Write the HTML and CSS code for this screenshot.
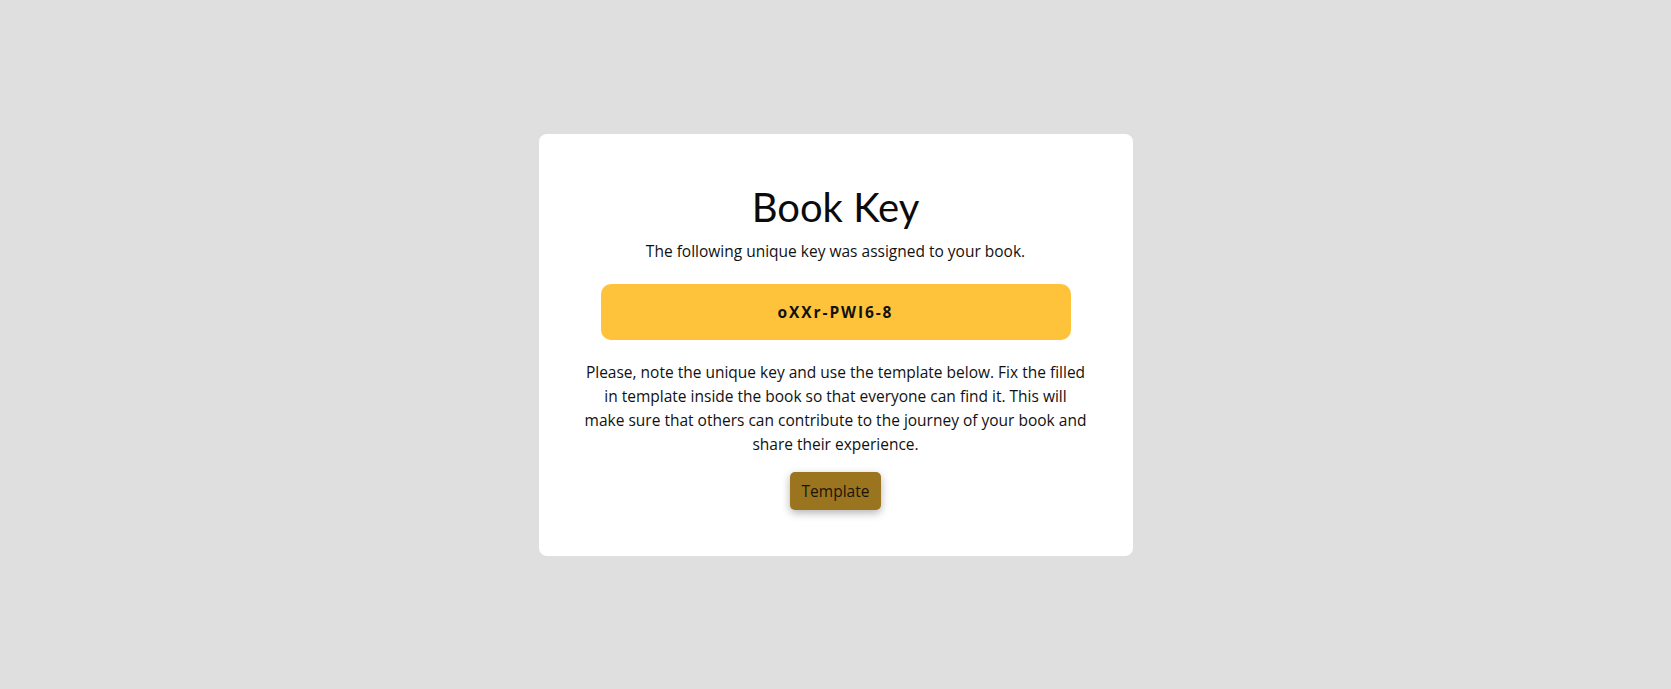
FILE: index.html
```html
<!DOCTYPE html>
<html lang="en">
<head>
<meta charset="utf-8">
<title>Book Key</title>
<link rel="stylesheet" href="styles.css">
</head>
<body>
<main class="page">
  <section class="card">
    <h1 class="title">Book Key</h1>
    <p class="subtitle">The following unique key was assigned to your book.</p>
    <div class="key">oXXr-PWI6-8</div>
    <p class="text">Please, note the unique key and use the template below. Fix the filled in template inside the book so that everyone can find it. This will make sure that others can contribute to the journey of your book and share their experience.</p>
    <button class="btn" type="button">Template</button>
  </section>
</main>
</body>
</html>
```
FILE: styles.css
```css
html, body {
  margin: 0;
  padding: 0;
}
body {
  background: #dfdfdf;
  font-family: "Open Sans", "Noto Sans", sans-serif;
  color: #111;
}
.page {
  min-height: 689px;
  display: flex;
  align-items: center;
  justify-content: center;
}
.card {
  width: 594px;
  box-sizing: border-box;
  background: #fff;
  border-radius: 8px;
  padding: 49px 40px 46px;
  display: flex;
  flex-direction: column;
  align-items: center;
  text-align: center;
}
.title {
  margin: 0;
  font-family: "Lato", sans-serif;
  font-weight: 400;
  font-size: 40px;
  line-height: 48px;
  color: #0b0b0b;
}
.subtitle {
  margin: 8px 0 0;
  font-size: 15.5px;
  line-height: 24px;
}
.key {
  margin-top: 21px;
  width: 470px;
  height: 56px;
  box-sizing: border-box;
  background: #fec33b;
  border-radius: 10px;
  display: flex;
  align-items: center;
  justify-content: center;
  font-weight: 700;
  font-size: 15.5px;
  letter-spacing: 1.9px;
  color: #111;
}
.text {
  margin: 20px 0 0;
  max-width: 503px;
  font-size: 15.5px;
  line-height: 24px;
}
.btn {
  margin-top: 16px;
  height: 38px;
  padding: 0 12px;
  border: none;
  border-radius: 5px;
  background: #9b7420;
  color: #1a1408;
  font-family: "Open Sans", "Noto Sans", sans-serif;
  font-size: 15.5px;
  box-shadow: 0 3px 8px rgba(0, 0, 0, 0.3);
}
```
